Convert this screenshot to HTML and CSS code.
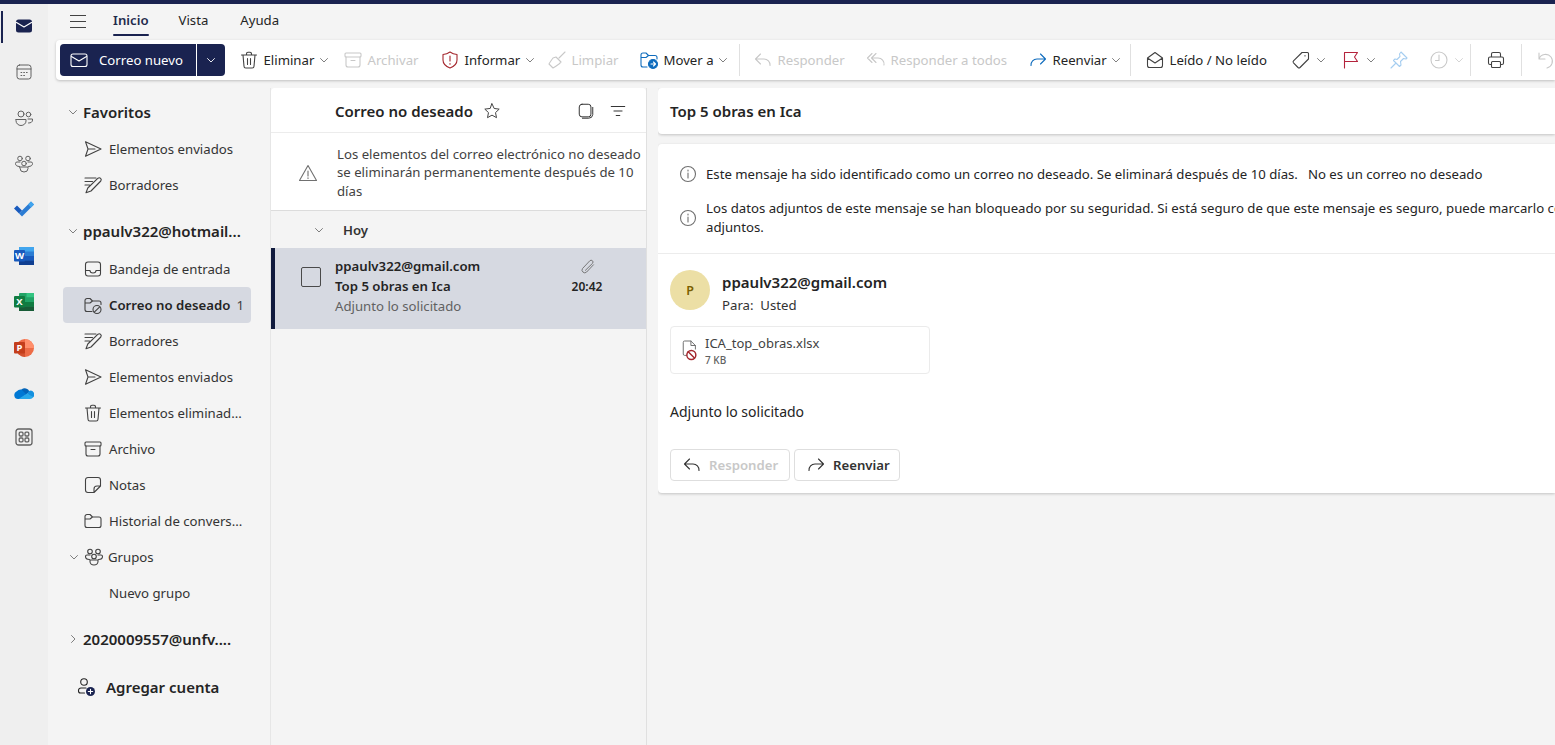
FILE: index.html
```html
<!DOCTYPE html>
<html lang="es">
<head>
  <meta charset="UTF-8" />
  <meta name="viewport" content="width=device-width, initial-scale=1.0"/>
  <title>Correo no deseado</title>
  <link rel="stylesheet" href="styles.css">
</head>
<body>
  <!-- shared outline icons -->
  <svg class="sprite" aria-hidden="true">
    <symbol id="i-mail" viewBox="0 0 20 20"><rect x="2" y="4" width="16" height="12.5" rx="2"/><path d="M2.5 6.5 10 11l7.5-4.5"/></symbol>
    <symbol id="i-chev" viewBox="0 0 10 10"><path d="M1.5 3.5 5 7l3.5-3.5"/></symbol>
    <symbol id="i-chev-r" viewBox="0 0 10 10"><path d="M3.5 1.5 7 5 3.5 8.5"/></symbol>
    <symbol id="i-send" viewBox="0 0 20 20"><path d="M2.5 2.8 18 10 2.5 17.2 5 10ZM5 10h7"/></symbol>
    <symbol id="i-draft" viewBox="0 0 20 20"><path d="M2 3h11M2 6.5h7.5M2 10h4.5M15 3.2a2 2 0 0 1 2.8 2.8L8 16l-5 1.800L4.800 13Z"/></symbol>
    <symbol id="i-trash" viewBox="0 0 20 20"><path d="M2.5 5h15M7.500 5V3.800a1.500 1.500 0 0 1 1.500-1.500h2a1.500 1.500 0 0 1 1.500 1.500V5M4 5l1 11.200A1.800 1.800 0 0 0 6.800 18h6.400a1.800 1.800 0 0 0 1.800-1.800L16 5M8.500 8.500v6M11.500 8.500v6"/></symbol>
    <symbol id="i-inbox" viewBox="0 0 20 20"><rect x="2.5" y="3" width="15" height="14" rx="2.5"/><path d="M2.5 11.5H7a3 2.500 0 0 0 6 0h4.500"/></symbol>
    <symbol id="i-folder" viewBox="0 0 20 20"><path d="M2 5.500A2 2 0 0 1 4 3.500h3l2.500 2.500H16a2 2 0 0 1 2 2v6.500a2 2 0 0 1-2 2H4a2 2 0 0 1-2-2ZM2 8h5l2.500-2"/></symbol>
    <symbol id="i-junk" viewBox="0 0 20 20"><path d="M9 16.500H4a2 2 0 0 1-2-2v-9a2 2 0 0 1 2-2h3L9.500 6H16a2 2 0 0 1 2 2v1.500M2 8h5l2.500-2"/><circle cx="14" cy="14.5" r="4"/><path d="m11.300 17.200 5.400-5.400"/></symbol>
    <symbol id="i-archive" viewBox="0 0 20 20"><rect x="2" y="3" width="16" height="4" rx="1"/><path d="M3 7v8a2 2 0 0 0 2 2h10a2 2 0 0 0 2-2V7M8 10.500h4"/></symbol>
    <symbol id="i-note" viewBox="0 0 20 20"><path d="M5 2.500h10A2.500 2.500 0 0 1 17.500 5v6L11 17.500H5A2.500 2.500 0 0 1 2.500 15V5A2.500 2.500 0 0 1 5 2.500ZM11 17.500V14a3 3 0 0 1 3-3h3.500"/></symbol>
    <symbol id="i-group" viewBox="0 0 20 20"><circle cx="6" cy="4.5" r="2.3"/><circle cx="14" cy="4.5" r="2.3"/><circle cx="10" cy="9.5" r="2.3"/><path d="M6 8H3a1.500 1.500 0 0 0-1.500 1.500c0 2 1.500 3 4 3M14 8h3a1.500 1.500 0 0 1 1.500 1.500c0 2-1.500 3-4 3M6 13h8v1.500a4 3.500 0 0 1-8 0Z"/></symbol>
    <symbol id="i-reply" viewBox="0 0 20 20"><path d="M7.500 4 2.500 9l5 5M3 9h8a6 6 0 0 1 6 6.500"/></symbol>
    <symbol id="i-forward" viewBox="0 0 20 20"><path d="M12.500 4l5 5-5 5M17 9H9a6 6 0 0 0-6 6.500"/></symbol>
    <symbol id="i-replyall" viewBox="0 0 20 20"><path d="M6 3.500 1.500 8 6 12.500M10 3.500 5.500 8l4.500 4.500M6 8h6a6 6 0 0 1 6 7"/></symbol>
    <symbol id="i-info" viewBox="0 0 20 20"><circle cx="10" cy="10" r="7.5"/><path d="M10 9v5M10 6v1"/></symbol>
  </svg>

  <div class="topstrip"></div>

  <div class="app">
    <nav class="rail">
      <a class="rail-btn active">
        <svg viewBox="0 0 20 20" class="rail-ico"><path class="mail-fill" d="M2 6a2.500 2.500 0 0 1 2.500-2.500h11A2.500 2.500 0 0 1 18 6v8a2.500 2.500 0 0 1-2.500 2.500h-11A2.500 2.500 0 0 1 2 14Z"/><path class="mail-flap" d="M2.500 6.500 10 11l7.500-4.500"/></svg>
      </a>
      <a class="rail-btn">
        <svg viewBox="0 0 20 20" class="rail-ico line"><rect x="3" y="3" width="14" height="14" rx="2.5"/><path d="M3 7h14M7 10.500h.8M9.700 10.500h.8M12.400 10.500h.8M7 13.500h.8M9.700 13.500h.8"/></svg>
      </a>
      <a class="rail-btn">
        <svg viewBox="0 0 20 20" class="rail-ico line"><circle cx="7" cy="6" r="3"/><circle cx="14.5" cy="6.5" r="2.3"/><path d="M2 11.500h10V13a5 4.500 0 0 1-10 0ZM14 11h4.500v1c0 2-1.500 3-4 3"/></svg>
      </a>
      <a class="rail-btn">
        <svg viewBox="0 0 20 20" class="rail-ico line"><use href="#i-group"/></svg>
      </a>
      <a class="rail-btn nudge">
        <svg viewBox="0 0 20 18" class="rail-ico"><path fill="#185abd" d="M0 9.500 3 6.500l5 5-3 3Z"/><path fill="#2b7cd3" d="M5 14.500 8 17.500 20 5.500 17 2.500 8 11.500Z"/><path fill="#41a5ee" d="M14 5.500 17 2.500 20 5.500 17 8.500Z"/></svg>
      </a>
      <a class="rail-btn">
        <svg viewBox="0 0 20 20" class="rail-ico"><rect x="5" y="1" width="15" height="18" rx="1" fill="#2b7cd3"/><rect x="5" y="1" width="15" height="4.5" fill="#41a5ee"/><rect x="5" y="10" width="15" height="4.5" fill="#185abd"/><rect x="5" y="14.5" width="15" height="4.5" fill="#103f91"/><rect x="0" y="4" width="11" height="11.5" rx="1" fill="#185abd"/><text x="5.5" y="13" class="logo-letter">W</text></svg>
      </a>
      <a class="rail-btn">
        <svg viewBox="0 0 20 20" class="rail-ico"><rect x="5" y="1" width="15" height="18" rx="1" fill="#21a366"/><rect x="12.5" y="1" width="7.5" height="4.5" fill="#33c481"/><rect x="12.5" y="5.5" width="7.500" height="4.5" fill="#21a366"/><rect x="5" y="10" width="15" height="4.5" fill="#107c41"/><rect x="5" y="14.5" width="15" height="4.5" fill="#185c37"/><rect x="0" y="4" width="11" height="11.5" rx="1" fill="#107c41"/><text x="5.5" y="13" class="logo-letter">X</text></svg>
      </a>
      <a class="rail-btn">
        <svg viewBox="0 0 20 20" class="rail-ico"><circle cx="11" cy="10" r="9" fill="#ed6c47"/><path fill="#ff8f6b" d="M11 1a9 9 0 0 1 9 9h-9Z"/><path fill="#d35230" d="M2 10a9 9 0 0 0 9 9v-9Z"/><rect x="0" y="4" width="11" height="11.5" rx="1" fill="#c43e1c"/><text x="5.5" y="13" class="logo-letter">P</text></svg>
      </a>
      <a class="rail-btn nudge">
        <svg viewBox="0 0 20 14" class="rail-ico"><path fill="#0364b8" d="M7.500 4.500A5.200 5.200 0 0 1 15.500 6.500L11 11 6 6.500Z"/><path fill="#0078d4" d="M7.500 4.500 12 9l-5 5H4A4 4 0 0 1 2.800 6.300 5 5 0 0 1 7.500 4.500Z"/><path fill="#1490df" d="M15 6a3.800 3.800 0 0 1 3.800 6.500L13 9Z"/><path fill="#28a8ea" d="M13 8.500 19.200 12a3.500 3.500 0 0 1-3.200 2H4.500Z"/></svg>
      </a>
      <a class="rail-btn apps">
        <svg viewBox="0 0 20 20" class="rail-ico line thick"><rect x="2" y="2" width="16" height="16" rx="2.5"/><rect x="5.2" y="5.2" width="3.8" height="3.8" rx="1"/><rect x="11" y="5.2" width="3.8" height="3.8" rx="1"/><rect x="5.2" y="11" width="3.8" height="3.8" rx="1"/><rect x="11" y="11" width="3.8" height="3.8" rx="1"/></svg>
      </a>
    </nav>

    <div class="main">
      <header class="tabs">
        <button class="burger" aria-label="Menu"><span></span><span></span><span></span></button>
        <span class="tab tab-inicio current">Inicio</span>
        <span class="tab tab-vista">Vista</span>
        <span class="tab">Ayuda</span>
      </header>

      <div class="toolbar">
        <div class="tb-new">
          <span class="new-main"><svg class="ico white"><use href="#i-mail"/></svg>Correo nuevo</span>
          <span class="new-drop"><svg class="chev white"><use href="#i-chev"/></svg></span>
        </div>

        <span class="tb"><svg class="ico"><use href="#i-trash"/></svg>Eliminar<svg class="chev"><use href="#i-chev"/></svg></span>
        <span class="tb off"><svg class="ico c-green"><use href="#i-archive"/></svg>Archivar</span>
        <span class="tb"><svg class="ico c-red" viewBox="0 0 20 20"><path d="M10 2c2 1.500 4 2.300 7 2.500V10c0 4-3 6.500-7 8-4-1.500-7-4-7-8V4.500C6 4.300 8 3.500 10 2ZM10 6v5M10 13.500v.8"/></svg>Informar<svg class="chev"><use href="#i-chev"/></svg></span>
        <span class="tb off"><svg class="ico" viewBox="0 0 20 20"><path d="M18 2l-6 6M9 7l5 5-2 2c-2 1.500-4 3-6 4l-4-4c1-2 2.500-4 4-6Z"/></svg>Limpiar</span>
        <span class="tb"><svg class="ico c-blue" viewBox="0 0 20 20"><path d="M8 17H4a2 2 0 0 1-2-2V5a2 2 0 0 1 2-2h3l2.500 2.500H16a2 2 0 0 1 2 2V9M2 7.500h5l2.500-2"/><circle class="dot-blue" cx="14" cy="14" r="4.5"/><path class="white-line" d="M12 14h4M14.500 12l2 2-2 2"/></svg>Mover a<svg class="chev far"><use href="#i-chev"/></svg></span>
        <i class="tb-div"></i>

        <span class="tb off"><svg class="ico c-purple"><use href="#i-reply"/></svg>Responder</span>
        <span class="tb off"><svg class="ico c-purple"><use href="#i-replyall"/></svg>Responder a todos</span>
        <span class="tb"><svg class="ico c-blue"><use href="#i-forward"/></svg>Reenviar<svg class="chev far"><use href="#i-chev"/></svg></span>
        <i class="tb-div"></i>

        <span class="tb"><svg class="ico" viewBox="0 0 20 20"><path d="M2.500 8 10 2.500 17.500 8v7.500a2 2 0 0 1-2 2h-11a2 2 0 0 1-2-2ZM2.500 8l7.500 5 7.500-5"/></svg>Leído / No leído</span>
        <span class="tb"><svg class="ico" viewBox="0 0 20 20"><path d="M11 2.500h5.500a1 1 0 0 1 1 1V9l-8.500 8.500a1.500 1.500 0 0 1-2 0L2.500 12.800a1.500 1.500 0 0 1 0-2ZM14 5.500v.5"/></svg><svg class="chev"><use href="#i-chev"/></svg></span>
        <span class="tb"><svg class="ico c-flag" viewBox="0 0 20 20"><path d="M3.500 18V2.500h13L13.500 7l3 4.500h-13"/></svg><svg class="chev"><use href="#i-chev"/></svg></span>
        <span class="tb"><svg class="ico c-pin" viewBox="0 0 20 20"><path d="M12 2l6 6-1 1-2.500-.5-3 3 .5 3.500-1.500 1.500-6-6 1.500-1.500L8 9.500l3-3L10.500 4ZM6.500 13.500 2 18"/></svg></span>
        <span class="tb off"><svg class="ico" viewBox="0 0 20 20"><circle cx="10" cy="10" r="8"/><path d="M10 5v5.500H6.500"/></svg><svg class="chev"><use href="#i-chev"/></svg></span>
        <i class="tb-div"></i>

        <span class="tb"><svg class="ico" viewBox="0 0 20 20"><path d="M5.500 7V4a1.500 1.500 0 0 1 1.500-1.500h6A1.500 1.500 0 0 1 14.500 4v3M5.500 14.500H4A1.500 1.500 0 0 1 2.500 13V8.500A1.500 1.500 0 0 1 4 7h12a1.500 1.500 0 0 1 1.500 1.500V13a1.500 1.500 0 0 1-1.500 1.500h-1.500"/><rect x="5.5" y="11.5" width="9" height="6" rx="1"/></svg></span>
        <i class="tb-div"></i>
        <span class="tb off"><svg class="ico" viewBox="0 0 20 20"><path d="M3 3v6h6M3 9a7 7 0 0 1 12-2 7 7 0 0 1-4 11"/></svg></span>
      </div>

      <div class="content">
        <aside class="folders">
          <div class="nav-head first"><svg class="chev"><use href="#i-chev"/></svg>Favoritos</div>
          <a class="nav-row"><svg class="ico"><use href="#i-send"/></svg>Elementos enviados</a>
          <a class="nav-row"><svg class="ico"><use href="#i-draft"/></svg>Borradores</a>

          <div class="nav-head account"><svg class="chev"><use href="#i-chev"/></svg><span class="clip">ppaulv322@hotmail...</span></div>
          <a class="nav-row"><svg class="ico"><use href="#i-inbox"/></svg>Bandeja de entrada</a>
          <a class="nav-row selected"><svg class="ico"><use href="#i-junk"/></svg>Correo no deseado<span class="count">1</span></a>
          <a class="nav-row"><svg class="ico"><use href="#i-draft"/></svg>Borradores</a>
          <a class="nav-row"><svg class="ico"><use href="#i-send"/></svg>Elementos enviados</a>
          <a class="nav-row"><svg class="ico"><use href="#i-trash"/></svg>Elementos eliminad...</a>
          <a class="nav-row"><svg class="ico"><use href="#i-archive"/></svg>Archivo</a>
          <a class="nav-row"><svg class="ico"><use href="#i-note"/></svg>Notas</a>
          <a class="nav-row"><svg class="ico"><use href="#i-folder"/></svg>Historial de convers...</a>
          <a class="nav-row groups"><svg class="chev"><use href="#i-chev"/></svg><svg class="ico"><use href="#i-group"/></svg>Grupos</a>
          <a class="nav-row"><span class="ico-space"></span>Nuevo grupo</a>

          <div class="nav-head account"><svg class="chev"><use href="#i-chev-r"/></svg><span class="clip">2020009557@unfv....</span></div>

          <a class="add-account">
            <svg class="ico" viewBox="0 0 20 20"><circle cx="8" cy="5" r="3.3"/><path d="M8.500 16H4.500A2 2 0 0 1 2.500 14v-.5A2.500 2.500 0 0 1 5 11h5"/><circle class="badge" cx="14.5" cy="14.5" r="4.5"/><path class="white-line" d="M14.500 12.300v4.400M12.300 14.500h4.400"/></svg>
            Agregar cuenta
          </a>
        </aside>

        <section class="list">
          <div class="list-head">
            <span class="list-title">Correo no deseado</span>
            <svg class="star" viewBox="0 0 20 20"><path d="m10 2 2.400 5.200 5.600.7-4.100 3.900 1.100 5.600-5-2.800-5 2.800 1.100-5.600L2 7.900l5.600-.7Z"/></svg>
            <svg class="select-ico" viewBox="0 0 20 20"><rect x="2.5" y="2.5" width="13" height="14" rx="3"/><path d="M17.500 6v8a4.500 4.500 0 0 1-4.500 4H6"/></svg>
            <svg class="filter-ico" viewBox="0 0 20 20"><path d="M2.500 5h15M5.500 10h9M8 15h4"/></svg>
          </div>
          <div class="list-notice">
            <svg class="warn" viewBox="0 0 20 20"><path d="M10 2.500 18.500 17.500h-17ZM10 8v5M10 14.800v.7"/></svg>
            <p>Los elementos del correo electrónico no deseado se eliminarán permanentemente después de 10 días</p>
          </div>
          <div class="list-group"><svg class="chev"><use href="#i-chev"/></svg>Hoy</div>
          <article class="msg">
            <span class="check"></span>
            <div class="msg-text">
              <div class="msg-from">ppaulv322@gmail.com</div>
              <div class="msg-subject">Top 5 obras en Ica</div>
              <div class="msg-preview">Adjunto lo solicitado</div>
            </div>
            <div class="msg-meta">
              <svg class="clip-ico" viewBox="0 0 20 20"><path d="M17 8 9 16.500a3.200 3.200 0 0 1-4.800-4.200l8.500-9a2.200 2.200 0 0 1 3.300 2.900L7.500 14.500"/></svg>
              <span class="msg-time">20:42</span>
            </div>
          </article>
        </section>

        <section class="reader">
          <div class="subject-card">Top 5 obras en Ica</div>
          <div class="mail-card">
            <div class="banners">
              <div class="banner">
                <svg class="ico muted"><use href="#i-info"/></svg>
                <p>Este mensaje ha sido identificado como un correo no deseado. Se eliminará después de 10 días.<a class="not-junk">No es un correo no deseado</a></p>
              </div>
              <div class="banner">
                <svg class="ico muted"><use href="#i-info"/></svg>
                <p>Los datos adjuntos de este mensaje se han bloqueado por su seguridad. Si está seguro de que este mensaje es seguro, puede marcarlo como seguro y ver los datos<br>adjuntos.</p>
              </div>
            </div>
            <div class="mail-body">
              <div class="sender">
                <span class="avatar">P</span>
                <div>
                  <div class="sender-mail">ppaulv322@gmail.com</div>
                  <div class="sender-to">Para:&nbsp; Usted</div>
                </div>
              </div>
              <div class="attachment">
                <svg class="file-ico" viewBox="0 0 20 24"><path d="M7 18H4a1.500 1.500 0 0 1-1.500-1.500v-13A1.500 1.500 0 0 1 4 2h7l5 5v4M11 2v5h5"/><circle class="block" cx="11.5" cy="17.5" r="5"/><path class="block" d="m8 14 7 7"/></svg>
                <div>
                  <div class="att-name">ICA_top_obras.xlsx</div>
                  <div class="att-size">7 KB</div>
                </div>
              </div>
              <p class="mail-text">Adjunto lo solicitado</p>
              <div class="mail-actions">
                <button class="action btn-reply"><svg class="ico dark"><use href="#i-reply"/></svg>Responder</button>
                <button class="action btn-forward"><svg class="ico dark"><use href="#i-forward"/></svg>Reenviar</button>
              </div>
            </div>
          </div>
        </section>
      </div>
    </div>
  </div>
</body>
</html>
```

FILE: styles.css
```css
html, body {
  margin: 0;
  padding: 0;
  height: 100%;
  overflow: hidden;
  background: #f4f4f4;
  color: #242424;
  font-family: 'Noto Sans', 'Open Sans', sans-serif;
  font-size: 13.2px;
}

p {
  margin: 0;
}

button {
  font: inherit;
}

svg {
  flex: none;
  fill: none;
  stroke: currentColor;
  stroke-width: 1.1;
  stroke-linecap: round;
  stroke-linejoin: round;
}

.sprite {
  display: none;
}

.topstrip {
  height: 4px;
  background: #1a2350;
}

.app {
  display: flex;
  height: 741px;
}

/* left app rail */
.rail {
  width: 48px;
  flex: none;
  background: #efefef;
  display: flex;
  flex-direction: column;
}

.rail-btn {
  position: relative;
  height: 44px;
  padding-bottom: 2px;
  display: flex;
  align-items: center;
  justify-content: center;
}

.rail-btn.nudge {
  height: 40px;
  padding-bottom: 6px;
}

.rail-btn.active::before {
  content: '';
  position: absolute;
  left: 1px;
  top: 7px;
  width: 2px;
  height: 32px;
  background: #1a2350;
}

.rail-btn.apps {
  margin-top: -3px;
}

.rail-ico {
  width: 20px;
  height: 20px;
  stroke: none;
}

.rail-ico.line {
  stroke: #616161;
  stroke-width: 1;
  fill: none;
}

.rail-ico.thick {
  stroke-width: 1.3;
}

.mail-fill {
  fill: #1a2350;
}

.mail-flap {
  stroke: #fff;
  stroke-width: 1.2;
}

.logo-letter {
  fill: #fff;
  stroke: none;
  font-size: 9.5px;
  font-weight: 700;
  text-anchor: middle;
  font-family: 'Noto Sans', sans-serif;
}

.main {
  flex: 1;
  min-width: 0;
}

/* ribbon tabs */
.tabs {
  height: 36px;
  display: flex;
  align-items: flex-start;
  padding-left: 22px;
}

.burger {
  width: 16px;
  height: 13px;
  padding: 0;
  margin: 11px 27px 0 0;
  border: 0;
  background: none;
  display: flex;
  flex-direction: column;
  justify-content: space-between;
}

.burger span {
  display: block;
  height: 1px;
  background: #424242;
}

.tab {
  position: relative;
  line-height: 32px;
  height: 32px;
}

.tab-inicio {
  margin-right: 30px;
}

.tab-vista {
  margin-right: 32px;
}

.tab.current {
  font-weight: 600;
  color: #1f2a4d;
}

.tab.current::after {
  content: '';
  position: absolute;
  left: 0;
  right: 0;
  bottom: 0;
  height: 2px;
  border-radius: 2px;
  background: #1a2350;
}

/* command bar */
.toolbar {
  height: 40px;
  margin-left: 8px;
  padding-left: 4px;
  background: #fff;
  border-radius: 4px 0 0 4px;
  box-shadow: 0 1px 3px rgba(0, 0, 0, 0.22);
  display: grid;
  grid-template-columns: 181px 104px 97px 107px 92px 98px 16px 113px 162px 100px 17px 146px 50px 48px 40px 39px 18px 33px 17px 40px;
  align-items: center;
  white-space: nowrap;
  overflow: hidden;
}

.tb-new {
  width: 165px;
  height: 32px;
  display: flex;
  color: #fff;
  border-radius: 4px;
  overflow: hidden;
}

.new-main {
  width: 136px;
  padding-left: 9px;
  box-sizing: border-box;
  display: flex;
  align-items: center;
  gap: 10px;
  background: #1a2350;
}

.new-drop {
  flex: 1;
  margin-left: 1px;
  display: flex;
  align-items: center;
  justify-content: center;
  background: #1a2350;
}

.tb {
  display: flex;
  align-items: center;
  gap: 4.5px;
}

.tb .ico {
  margin-left: -2px;
}

.tb .chev {
  margin-left: 3px;
}

.tb .chev.far {
  margin-left: 6px;
}

.tb .ico + .chev {
  margin-left: 0;
}

.tb.off {
  color: #c8c8c8;
}

.tb-div {
  display: block;
  width: 1px;
  height: 32px;
  background: #e0e0e0;
}

.ico {
  width: 20px;
  height: 20px;
}

.chev {
  width: 10px;
  height: 10px;
  color: #707070;
  stroke-width: 0.9;
}

.white {
  color: #fff;
}

.tb > svg.ico {
  color: #424242;
}

.tb.off > svg.ico {
  color: #c8c8c8;
}

.tb > svg.c-green {
  color: #b7d3a0;
}

.tb > svg.c-red {
  color: #a4262c;
}

.tb > svg.c-blue {
  color: #0f6cbd;
}

.tb > svg.c-purple {
  color: #d8b9dc;
}

.tb > svg.c-flag {
  color: #b4233c;
}

.tb > svg.c-pin {
  color: #a5cdf0;
}

.tb.off .chev {
  color: #d0d0d0;
}

.dot-blue {
  fill: #0f6cbd;
}

.white-line {
  stroke: #fff;
}

/* three panes */
.content {
  display: flex;
  height: 665px;
  margin-left: 8px;
}

.folders {
  width: 214px;
  flex: none;
  padding-top: 12px;
  box-sizing: border-box;
  white-space: nowrap;
}

.nav-head {
  height: 38px;
  padding-left: 12px;
  display: flex;
  align-items: center;
  gap: 5px;
  font-size: 15px;
  font-weight: 600;
}

.nav-head.first {
  height: 39px;
}

.nav-head.account {
  height: 40px;
  margin-top: 8px;
}

.nav-row {
  height: 36px;
  margin: 0 19px 0 7px;
  padding-left: 20px;
  border-radius: 4px;
  display: flex;
  align-items: center;
  gap: 6px;
  color: #333;
}

.nav-row .ico {
  color: #424242;
}

.nav-row.selected {
  background: #d6d9e1;
  font-weight: 600;
  color: #242424;
}

.count {
  margin-left: auto;
  margin-right: 7px;
  font-weight: 400;
  color: #424242;
}

.nav-row.groups {
  padding-left: 0;
  margin-left: 13px;
  gap: 4.5px;
}

.ico-space {
  width: 20px;
}

.add-account {
  height: 40px;
  margin-top: 8px;
  padding-left: 20px;
  display: flex;
  align-items: center;
  gap: 10px;
  font-size: 15px;
  font-weight: 600;
}

.add-account .badge {
  fill: #1a2350;
  stroke: none;
}

/* message list */
.list {
  width: 375px;
  flex: none;
  margin-top: 8px;
  border-left: 1px solid #e6e6e6;
  border-right: 1px solid #e0e0e0;
}

.list-head {
  height: 44px;
  box-sizing: content-box;
  background: #fff;
  border-bottom: 1px solid #ececec;
  border-radius: 4px 4px 0 0;
  display: flex;
  align-items: center;
  padding-left: 64px;
}

.list-title {
  font-size: 15px;
  font-weight: 600;
  width: 148px;
  margin-top: 2px;
  white-space: nowrap;
}

.star {
  width: 18px;
  height: 18px;
  color: #424242;
  margin-top: 2px;
}

.select-ico {
  width: 18px;
  height: 18px;
  margin-left: 76px;
  margin-top: 2px;
  color: #333;
}

.filter-ico {
  width: 18px;
  height: 18px;
  margin-left: 14px;
  margin-top: 2px;
  color: #333;
}

.list-notice {
  height: 78px;
  box-sizing: border-box;
  background: #fff;
  border-bottom: 1px solid #dcdcdc;
  display: flex;
  align-items: center;
  padding: 2px 4px 0 27px;
  gap: 19px;
  line-height: 18.5px;
  color: #424242;
}

.warn {
  width: 20px;
  height: 20px;
  color: #707070;
}

.list-group {
  height: 37px;
  display: flex;
  align-items: center;
  padding-left: 43px;
  gap: 19px;
  font-weight: 600;
  color: #333;
}

.msg {
  height: 81px;
  box-sizing: border-box;
  background: #d6d9e1;
  border-left: 4px solid #101a3d;
  display: flex;
  align-items: flex-start;
  padding: 8px 0 0 26px;
}

.check {
  width: 18px;
  height: 18px;
  margin-top: 11px;
  border: 1px solid #4a4a4a;
  border-radius: 2px;
  flex: none;
}

.msg-text {
  margin-left: 14px;
  width: 236px;
  line-height: 20px;
  white-space: nowrap;
}

.msg-from,
.msg-subject {
  font-weight: 600;
}

.msg-preview {
  color: #616161;
}

.msg-meta {
  width: 32px;
  display: flex;
  flex-direction: column;
  align-items: center;
  line-height: 20px;
}

.clip-ico {
  width: 17px;
  height: 17px;
  margin-top: 2px;
  margin-bottom: 2px;
  color: #707070;
}

.msg-time {
  font-size: 12px;
  font-weight: 600;
  white-space: nowrap;
}

/* reading pane */
.reader {
  flex: 1;
  min-width: 0;
  margin-left: 11px;
  margin-top: 8px;
  overflow: hidden;
  padding-bottom: 6px;
}

.subject-card {
  height: 46px;
  line-height: 46px;
  padding-left: 12px;
  margin-bottom: 10px;
  background: #fff;
  border-radius: 4px 0 0 4px;
  box-shadow: 0 1px 3px rgba(0, 0, 0, 0.2);
  font-size: 15px;
  font-weight: 600;
}

.mail-card {
  height: 349px;
  background: #fff;
  border-radius: 4px 0 0 4px;
  box-shadow: 0 1px 3px rgba(0, 0, 0, 0.2);
}

.banners {
  height: 110px;
  box-sizing: border-box;
  padding: 20px 0 0 20px;
  border-bottom: 1px solid #ececec;
  white-space: nowrap;
  overflow: hidden;
}

.banner {
  display: flex;
  align-items: center;
  gap: 8px;
  line-height: 19px;
  margin-bottom: 15px;
}

.muted {
  color: #707070;
}

.not-junk {
  margin-left: 10px;
}

.mail-body {
  padding: 16px 12px 0;
}

.sender {
  height: 40px;
  display: flex;
  align-items: flex-start;
  gap: 12px;
}

.avatar {
  width: 40px;
  height: 40px;
  border-radius: 50%;
  background: #ecdfa5;
  color: #7a5f00;
  font-size: 12.5px;
  font-weight: 600;
  display: flex;
  align-items: center;
  justify-content: center;
}

.sender-mail {
  font-size: 15px;
  font-weight: 600;
  line-height: 24px;
}

.sender-to {
  line-height: 22px;
  color: #333;
}

.attachment {
  width: 260px;
  height: 48px;
  margin-top: 16px;
  box-sizing: border-box;
  border: 1px solid #ebebeb;
  border-radius: 4px;
  display: flex;
  align-items: center;
  padding-left: 10px;
  gap: 6px;
}

.file-ico {
  width: 18px;
  height: 24px;
  color: #707070;
}

.file-ico .block {
  stroke: #a4262c;
  stroke-width: 1.6;
  fill: #fff;
}

.att-name {
  font-size: 13px;
  line-height: 18px;
  color: #424242;
}

.att-size {
  font-size: 10px;
  font-weight: 500;
  line-height: 12px;
  margin-top: 2px;
  color: #616161;
}

.mail-text {
  margin-top: 28px;
  font-size: 14px;
  line-height: 20px;
}

.mail-actions {
  display: flex;
  gap: 4px;
  margin-top: 27px;
}

.action {
  height: 32px;
  box-sizing: border-box;
  background: #fff;
  border: 1px solid #dedede;
  border-radius: 4px;
  display: flex;
  align-items: center;
  gap: 7px;
  padding: 0 0 0 11px;
  font-weight: 600;
  color: #333;
}

.btn-reply {
  width: 120px;
  color: #c8c8c8;
}

.btn-forward {
  width: 106px;
}

.dark {
  color: #333;
}
```
